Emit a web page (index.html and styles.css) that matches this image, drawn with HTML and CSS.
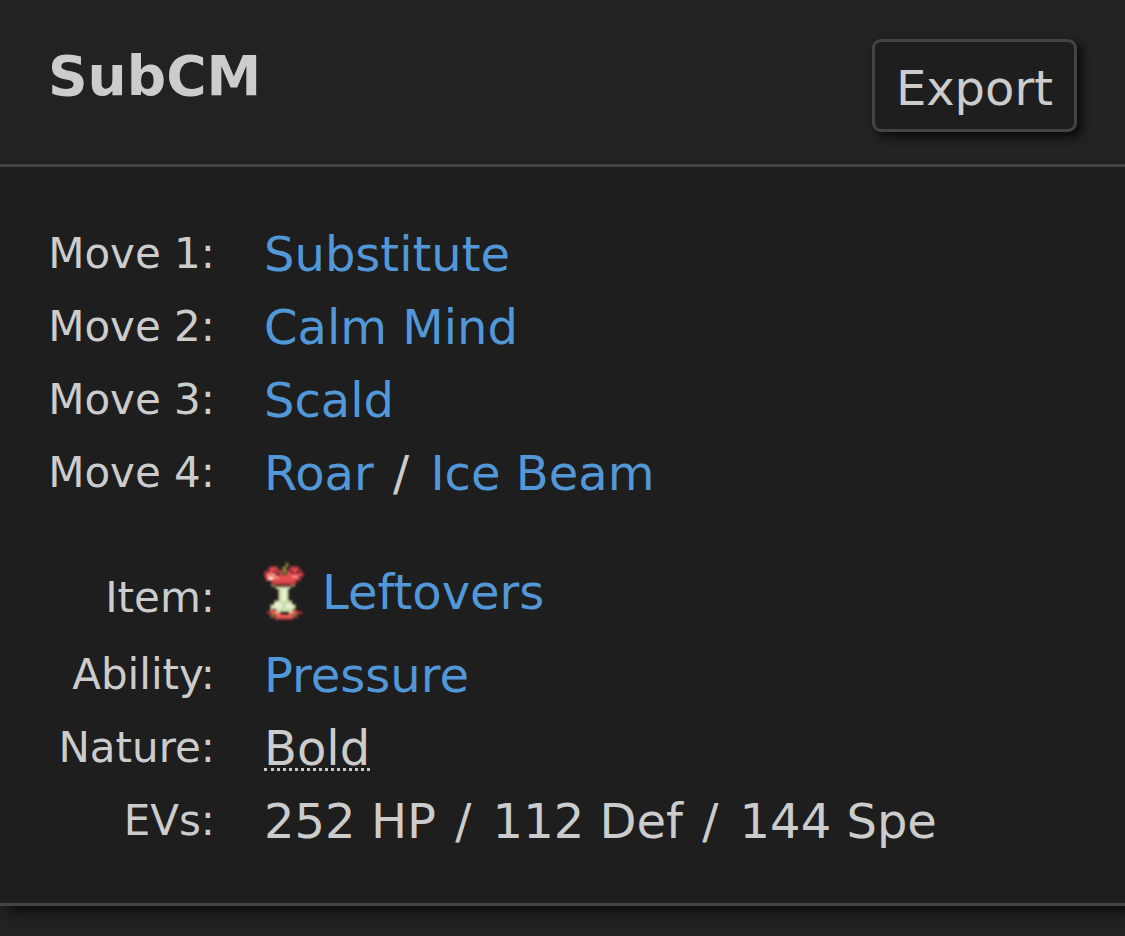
FILE: index.html
```html
<!DOCTYPE html>
<html lang="en">
<head>
<meta charset="utf-8">
<title>SubCM</title>
<link rel="stylesheet" href="styles.css">
</head>
<body>
<main class="set">
  <header class="set-header">
    <h1 class="set-name">SubCM</h1>
    <button class="export" type="button">Export</button>
  </header>
  <div class="set-body">
    <dl class="moves">
      <dt>Move 1:</dt><dd><a href="#substitute">Substitute</a></dd>
      <dt>Move 2:</dt><dd><a href="#calm-mind">Calm Mind</a></dd>
      <dt>Move 3:</dt><dd><a href="#scald">Scald</a></dd>
      <dt>Move 4:</dt><dd><a href="#roar">Roar</a> <span class="slash">/</span> <a href="#ice-beam">Ice Beam</a></dd>
    </dl>
    <dl class="misc">
      <dt class="item-label">Item:</dt>
      <dd><a class="item" href="#leftovers"><svg class="item-icon" viewBox="0 0 40 60" aria-hidden="true">
        <path fill="#963039" d="M5 4h9v3h12V4h9v3h3v4h2v4h-3v4h-4v3H7v-3H3v-3H0V9h3V7h2z"/>
        <path fill="#e64d50" d="M6 6h7v4h13V6h8v5h4v3h-3v4h-4v4H9v-3H2v-7h4z"/>
        <path fill="#c33c43" d="M9 20h22v3H9z"/>
        <path fill="#6e2630" d="M9 9h3v2h4v3h-3v-2H9zM26 8h3v3h4V8h2v4h-7z"/>
        <path fill="#f58678" d="M3 11h8v3h4v3H6v-2H3zM28 13h6v3h-6z"/>
        <path fill="#fff2df" d="M4 15h5v3H5z"/>
        <path fill="#44501f" d="M18 4h3V0h4v5h-2v8h-5z"/>
        <path fill="#8d8742" d="M19 5h3V2h2v3h-2v6h-3z"/>
        <path fill="#927052" d="M7 22h4v2h16v-2h4v3h-4v2h-2v11h3v4h4v8H6v-8h4v-4h4V27h-3v-2H7z"/>
        <path fill="#c8dfae" d="M12 25h14v2h-2v12h4v4h3v7H7v-7h4v-4h4V27h-3z"/>
        <path fill="#e8f3d2" d="M18 27h4v12h-4zM10 41h8v5h-8zM22 42h7v4h-7z"/>
        <path fill="#9c343a" d="M3 49h5v-2h4v3h4v2h8v-2h5v-3h3v2h6v3h-4v4h-5v2H11v-2H6v-4H3z"/>
        <path fill="#ec6054" d="M7 49h5v2h5v2h8v-2h4v-2h4v3h-4v4H12v-4H7z"/>
        <path fill="#f49c7b" d="M11 50h5v2h-5zM25 50h4v2h-4z"/>
        <path fill="#65702c" d="M7 52h4v3H7zM28 52h4v3h-4z"/>
      </svg><span>Leftovers</span></a></dd>
      <dt>Ability:</dt><dd><a href="#pressure">Pressure</a></dd>
      <dt>Nature:</dt><dd><abbr title="+Def, -Atk">Bold</abbr></dd>
      <dt>EVs:</dt><dd>252 HP <span class="slash">/</span> 112 Def <span class="slash">/</span> 144 Spe</dd>
    </dl>
  </div>
</main>
</body>
</html>
```
FILE: styles.css
```css
* { box-sizing: border-box; }
html { background: #222; }
body { margin: 0; min-height: 100vh; color: #ccc; font: 48px/72px "DejaVu Sans", Verdana, sans-serif; }
.set { position: relative; background: #1e1e1e; border-bottom: 3px solid #444; box-shadow: 9px 6px 12px #0d0d0d; }
.set-header { display: flex; justify-content: space-between; align-items: flex-start; padding: 39px 48px 32px; background: #222; border-bottom: 3px solid #444; }
.set-name { margin: 0; font-size: 55px; line-height: 75px; }
.export { height: 93px; padding: 4px 21px 0; background: #1e1e1e; color: #ccc; border: 3px solid #444; border-radius: 9px; box-shadow: 5px 5px 8px #0c0c0c; font: inherit; }
.set-body { padding: 50px 48px 46px; }
dl { display: grid; grid-template-columns: 167px 1fr; column-gap: 49px; grid-auto-rows: 73px; align-items: center; margin: 0; }
dt { text-align: right; font-size: 42px; }
dd { margin: 0; }
a { color: #5298d8; text-decoration: none; }
.slash { margin: 0 6px 0 4px; }
.misc { margin-top: 36px; grid-template-rows: 93px; }
.item-label { padding-top: 12px; }
.item { display: flex; align-items: center; gap: 18px; }
.item-icon { width: 40px; height: 60px; filter: blur(1px); }
abbr { display: inline-block; line-height: 40px; text-decoration: none; border-bottom: 3px dotted #ccc; }
```
